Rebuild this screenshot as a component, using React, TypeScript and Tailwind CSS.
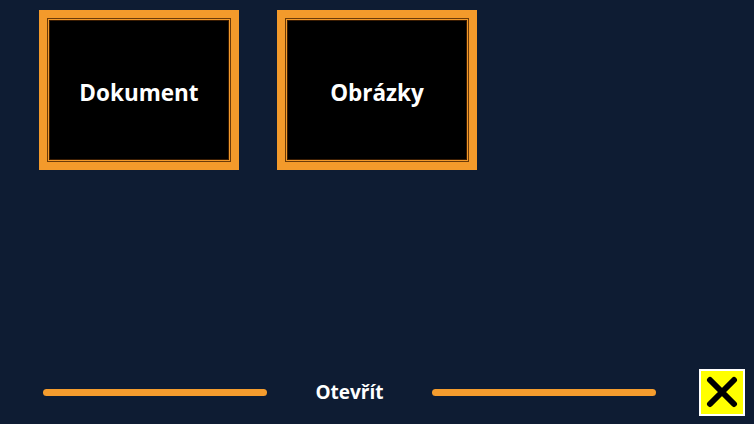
import React from "react";

function Tile({ label }: { label: string }) {
  return (
    <button className="w-[200px] h-[160px] bg-[#f39a2b] p-[8px]">
      <div className="w-full h-full border border-[#6b3a08] bg-[#f39a2b] p-[1px]">
        <div className="w-full h-full bg-black border border-[#3a1c02] flex items-center justify-center pt-[5px]">
          <span className="text-white font-bold text-[22.5px]">{label}</span>
        </div>
      </div>
    </button>
  );
}

export default function App() {
  return (
    <div
      className="w-[754px] h-[424px] bg-[#0e1c33] flex flex-col overflow-hidden"
      style={{ fontFamily: '"Open Sans", "Noto Sans", sans-serif' }}
    >
      <div className="flex gap-[38px] pl-[39px] pt-[10px]">
        <Tile label="Dokument" />
        <Tile label="Obrázky" />
      </div>
      <div className="mt-auto flex items-center h-[56px] pb-[8px] pl-[43px] pr-[9px]">
        <div className="w-[224px] h-[7px] rounded-full bg-[#f49c2e]" />
        <div className="w-[165px] text-center text-white font-bold text-[19px]">Otevřít</div>
        <div className="w-[224px] h-[7px] rounded-full bg-[#f49c2e]" />
        <button className="ml-auto w-[46px] h-[47px] bg-[#ffff00] border-2 border-white flex items-center justify-center">
          <svg width="32" height="32" viewBox="0 0 32 32">
            <path d="M4 4 L28 28 M28 4 L4 28" stroke="#000" strokeWidth="6" strokeLinecap="round" />
          </svg>
        </button>
      </div>
    </div>
  );
}
